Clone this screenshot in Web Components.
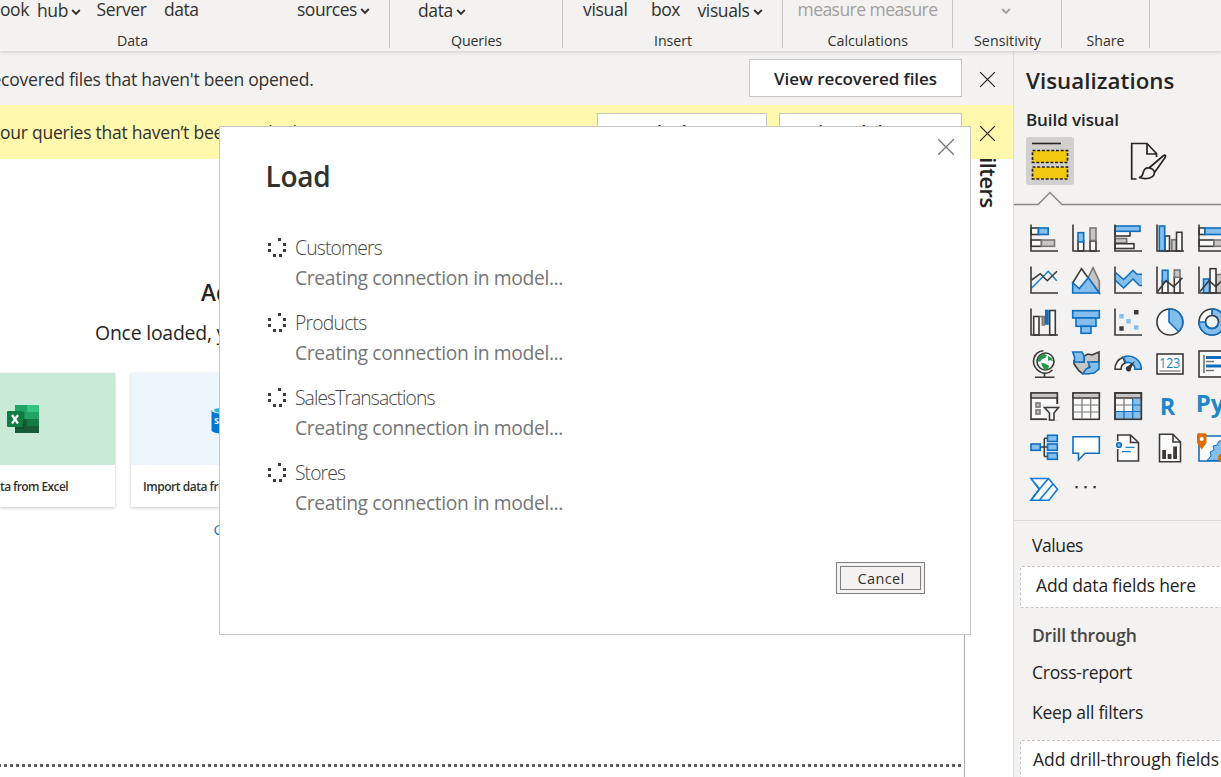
<!DOCTYPE html>
<html lang="en">
<head>
<meta charset="utf-8">
<title>Report editor</title>
<style>
html,body{margin:0;height:100%;overflow:hidden;background:#fff}
body{font-family:"Open Sans","Noto Sans",sans-serif;color:#323130}
</style>
</head>
<body>
<report-app></report-app>
<script>
// Registers an element whose shadow root is filled from a template string.
function define(name, css, html, after) {
  const tpl = document.createElement('template');
  tpl.innerHTML = '<style>*{box-sizing:border-box}' + css + '</style>' + html;
  customElements.define(name, class extends HTMLElement {
    connectedCallback() {
      if (this.shadowRoot) return;
      this.attachShadow({ mode: 'open' }).append(tpl.content.cloneNode(true));
      if (after) after(this, this.shadowRoot);
    }
  });
}

// One line of text, tracked to fill the width in its "w" attribute.
define('ui-text', `
:host{display:block;flex:none;white-space:nowrap;line-height:24px;height:24px;font-size:17.5px}
span{display:inline-block;height:100%;white-space:pre}`,
'<span><slot></slot></span>', (el, root) => {
  const size = el.getAttribute('size'), weight = el.getAttribute('weight'), w = +el.getAttribute('w');
  if (size) el.style.fontSize = size + 'px';
  if (weight) el.style.fontWeight = weight;
  if (w) {
    const span = root.querySelector('span');
    const n = el.textContent.length;
    el.style.letterSpacing = ((w - span.getBoundingClientRect().width) / n).toFixed(3) + 'px';
    el.style.width = w + 'px';
  }
});

define('ui-chevron', ':host{display:block;flex:none;width:10px;height:8px}svg{display:block}',
'<svg width="10" height="8" viewBox="0 0 10 8"><path d="M1.2 2 5 5.8 8.8 2" fill="none" stroke="currentColor" stroke-width="1.9"/></svg>');

define('ui-close', ':host{display:block;flex:none;width:18px;height:18px}svg{display:block;width:100%;height:100%}',
'<svg viewBox="0 0 18 18"><path d="M1.2 1.2 16.800 16.800M16.800 1.2 1.2 16.800" fill="none" stroke="currentColor" stroke-width="1.3"/></svg>');

define('ribbon-group', `
:host{display:flex;flex-direction:column;flex:none;height:48px;border-right:1px solid #c8c6c4}
.words{display:flex;align-items:flex-start;height:25px;flex:none}
.label{margin-top:4px;height:19px;flex:none}`,
'<div class="words"><slot></slot></div><div class="label"><slot name="label"></slot></div>');

define('app-ribbon', `
:host{display:flex;flex:none;height:51px;background:#f3f2f1;position:relative;z-index:1;box-shadow:0 1px 4px rgba(0,0,0,.16)}
ui-text{height:18px;line-height:18px}ui-text[slot]{height:19px;line-height:24px}
.d{margin-top:1px} ui-chevron{margin-top:7px;margin-left:4px;color:#323130} .off{color:#a19f9d}`,
`<ribbon-group style="width:390px">
  <ui-text w="29">ook</ui-text><ui-text class="d" w="31" style="margin-left:8px">hub</ui-text><ui-chevron style="margin-left:3px;margin-top:8px"></ui-chevron>
  <ui-text w="50" style="margin-left:15.5px">Server</ui-text><ui-text w="34.5" style="margin-left:17.5px">data</ui-text>
  <ui-text w="60" style="margin-left:98.5px">sources</ui-text><ui-chevron style="margin-left:3px"></ui-chevron>
  <ui-text slot="label" size="14.2" w="31" style="margin-left:117px">Data</ui-text>
</ribbon-group>
<ribbon-group style="width:173px">
  <ui-text class="d" w="35" style="margin-left:28px">data</ui-text><ui-chevron style="margin-left:3px;margin-top:8px"></ui-chevron>
  <ui-text slot="label" size="14.2" w="51" style="margin-left:61px">Queries</ui-text>
</ribbon-group>
<ribbon-group style="width:220px">
  <ui-text w="44.5" style="margin-left:20px">visual</ui-text><ui-text w="29" style="margin-left:23.5px">box</ui-text>
  <ui-text class="d" w="52" style="margin-left:17.5px">visuals</ui-text><ui-chevron style="margin-left:3px;margin-top:8px"></ui-chevron>
  <ui-text slot="label" size="14.2" w="38" style="margin-left:91px">Insert</ui-text>
</ribbon-group>
<ribbon-group style="width:170px">
  <ui-text class="off" w="140" style="margin-left:14.500px">measure measure</ui-text>
  <ui-text slot="label" size="14.2" w="80.500" style="margin-left:44.500px">Calculations</ui-text>
</ribbon-group>
<ribbon-group style="width:109px">
  <ui-chevron class="off" style="margin-left:48px;color:#a19f9d"></ui-chevron>
  <ui-text slot="label" size="14.2" w="67" style="margin-left:21px">Sensitivity</ui-text>
</ribbon-group>
<ribbon-group style="width:88px">
  <ui-text slot="label" size="14.2" w="38" style="margin-left:24.500px">Share</ui-text>
</ribbon-group>`);

define('bar-button', `
:host{display:flex;flex:none;justify-content:center;align-items:center;height:38px;background:#fff;border:1px solid #c8c6c4;color:#252423}`,
'<slot></slot>');

define('message-bar', `
:host{display:flex;flex:none;height:54px;padding:8px 17px 0 0;overflow:hidden;position:relative;background:#f3f2f1}
:host([warn]){background:#fff8ad}
.msg{flex:1;min-width:0;padding-top:8px}:host([warn]) .msg{padding-top:7px}.btns{display:flex;gap:12px}ui-close{margin:12px 0 0 17px;width:17px;height:17px;color:#252423}`,
'<div class="msg"><slot></slot></div><div class="btns"><slot name="b"></slot></div><ui-close></ui-close>');

define('source-card', `
:host{display:block;flex:none;height:134px;background:#fff;box-shadow:0 1px 3px rgba(0,0,0,.22);overflow:hidden}
.pic{height:92px;background:var(--tint)}.t{padding-top:10px}svg{display:block}`,
'<div class="pic"><slot name="pic"></slot></div><div class="t"><slot></slot></div>');

define('report-canvas', `
:host{display:flex;flex-direction:column;flex:none;width:965px;border-right:1px solid #b3b0ad;background:#fff;overflow:hidden}
.cards{display:flex;gap:15.500px;margin-top:28px;height:134px}
.dots{margin-top:auto;margin-bottom:10px;height:3px;width:962px;background:linear-gradient(90deg,#605e5c 50%,transparent 50%) 4px 0/6px 3px}
svg{display:block}`,
`<ui-text size="22.5" weight="600" w="43" style="margin:122px 0 0 201px;color:#252423">Add</ui-text>
<ui-text size="19.4" w="162" style="margin:16px 0 0 95px;color:#252423">Once loaded, your</ui-text>
<div class="cards">
  <source-card style="width:115px;--tint:#c9ead7">
    <svg slot="pic" width="115" height="92"><g transform="translate(7 32)">
      <rect x="8" width="24" height="28" rx="1" fill="#107c41"/><path d="M8 0h12v7H8z" fill="#21a366"/><path d="M20 0h12v7H20z" fill="#33c481"/><path d="M8 7h12v7H8z" fill="#21a366"/><path d="M20 7h12v7H20z" fill="#21a366"/><path d="M8 14h12v7H8z" fill="#185c37"/><path d="M8 21h24v7H8z" fill="#185c37"/>
      <path d="M8 7h9.500v17H8z" fill="#0b4a28" opacity=".5"/><rect y="6" width="16" height="16" rx="1" fill="#107c41"/><path d="M5 10l6 8.500M11 10 5 18.500" stroke="#fff" stroke-width="2.200"/></g></svg>
    <ui-text size="12" weight="600" w="68">ta from Excel</ui-text>
  </source-card>
  <source-card style="width:246px;--tint:#eff5fc">
    <svg slot="pic" width="246" height="92"><g transform="translate(80.500 33)">
      <path d="M0 4v20c0 2 4.500 3.500 10 3.500S20 26 20 24V4z" fill="#0078d4"/><ellipse cx="10" cy="4" rx="10" ry="3.700" fill="#e8f4fb"/><ellipse cx="10" cy="4.300" rx="7.500" ry="2.400" fill="#32b0d5"/><text x="2.500" y="18" font-family="Open Sans" font-size="9" font-weight="700" fill="#fff">SQL</text></g></svg>
    <ui-text size="12" weight="600" w="93" style="margin-left:12.500px">Import data from</ui-text>
  </source-card>
</div>
<ui-text size="14.500" w="25" style="margin:11px 0 0 213.500px;color:#0f6cbd">Get</ui-text>
<div class="dots"></div>`);

define('filter-strip', `
:host{display:block;flex:1;background:#fff;overflow:hidden}
div{writing-mode:vertical-rl;margin:-13px 0 0 10px;font-size:22px;font-weight:600;line-height:28px;height:80px;width:28px;letter-spacing:-.55px;color:#252423;white-space:nowrap}`,
'<div>Filters</div>');

const K = 'stroke="#3b3a39"', N = 'fill="none"', W = `fill="#fafafa" ${K}`, B = 'fill="#83beec" stroke="#106ebe"', G = 'fill="#c8c6c4" stroke="#797775"';
const AX = `<path d="M1 .5V27H28" ${N} ${K}/>`;
const r = (x, y, x2, y2, s) => `<rect x="${x}" y="${y}" width="${(x2 - x).toFixed(1)}" height="${(y2 - y).toFixed(1)}" ${s}/>`;
const HEAD = r(1, 1, 27.3, 27.3, W) + `<path d="M1 1H27.300V6H1z" fill="#c8c6c4" ${K}/>`;
const icons = [
  r(1, 4, 8.5, 10.5, W) + r(8.5, 4, 18.2, 10.5, B) + r(1, 16, 11.5, 22.3, W) + r(11.5, 16, 24.5, 22.3, G) + AX,
  r(6, 17, 11.7, 27, W) + r(6, 8.7, 11.7, 18, B) + r(18, 17, 24, 27, W) + r(18, 4, 24, 16.5, G) + AX,
  r(1, 7, 16, 12, W) + r(1, 2, 26, 7.3, B) + r(1, 14.5, 12.7, 19, G) + r(1, 19.7, 20, 24.5, W) + AX,
  r(9, 12, 13.5, 27, W) + r(3.3, 2, 8.7, 27, B) + r(15.7, 15.7, 20.5, 27, G) + r(20.5, 8.3, 26, 27, W) + AX,
  r(1, 4, 7, 10.5, W) + r(7, 4, 27, 10.5, B) + r(1, 16, 16, 22.3, W) + r(16, 16, 27, 22.3, G) + AX,
  `<path d="M1.700 22 18.300 5.300 26.700 14.700" ${N} stroke="#1a86c9"/><path d="M1.700 14 10.300 7.700 17.300 14.700 27 5.300" ${N} ${K}/>` + AX,
  `<path d="M.7 17 9.500 2.700 16.300 12 9 26z" ${W}/><path d="M16 12 21 1.700 27.300 15V27z" ${G}/><path d="M.7 17 7.300 22.500 16.300 11.500 27.300 27H.7z" ${B}/>`,
  `<path d="M1.500 6.500 9.700 13.500 19 4.300 23 8.300H28V19.500H26L19 13 9.700 22 1.500 14.500z" fill="#83beec"/><path d="M1.500 6.500 9.700 13.500 19 4.300 23 8.300H28M1.500 14.500 9.700 22 19 13 25.500 19.500H28" ${N} stroke="#106ebe"/>` + AX,
  r(6.3, 15, 12, 27, W) + r(6.3, 4.3, 12, 15.7, B) + r(18.3, 11, 24, 27, W) + r(18.3, 4, 24, 11.3, G) + `<path d="M1.700 25.500 10 14.700 17.700 20.700 26.500 11.700" ${N} ${K}/>` + AX,
  r(5.5, 13, 11.5, 27, B) + r(18, 8.5, 24, 27, G) + r(12, 2.7, 18, 27, W) + `<path d="M2 25.500 11 14.700 17.700 20.700 28 11" ${N} ${K}/>` + AX,
  r(3.7, 8.5, 9, 27, W) + `<path d="M10 8.500h4.300V17h-2V9z" ${G}/>` + r(15.8, 2.5, 18, 16, 'fill="#106ebe" stroke="#106ebe"') + r(19.7, 2.5, 25.3, 27, W) + AX,
  r(.7, 2.7, 27.3, 10, B) + r(4, 10, 24, 18.3, B) + r(9, 18.3, 19, 25.3, B),
  r(5.3, 6, 9.7, 10.5, 'fill="#83beec"') + r(12.3, 11, 16.7, 15.5, 'fill="#83beec"') + r(20, 17.3, 24.5, 21.7, 'fill="#83beec"') + r(20, 2, 24.5, 6.5, 'fill="#3b3a39"') + r(5.3, 18.3, 9.7, 22.7, 'fill="#3b3a39"') + AX,
  `<circle cx="13.900" cy="14" r="13" ${W}/><path d="M13 1.100V14L22.500 23.500A13 13 0 0 0 13.500 1z" ${B}/>`,
  `<circle cx="14" cy="14" r="13" ${W}/><path d="M14 1A13 13 0 1 1 1 14H7.500A6.500 6.500 0 1 0 14 7.500z" ${B}/><circle cx="14" cy="14" r="6.500" fill="#f3f2f1" ${K}/><path d="M20.500 14A6.500 6.500 0 1 1 7.500 14M14 1v6.500" ${N} stroke="#106ebe"/>`,
  `<circle cx="15.500" cy="11.500" r="8.500" ${W}/><path d="M9.500 6 14 3.800 17 5.500 15 8 11.500 9.500 10 12 7.500 11zM18 6l3.500 2 1.500 3.500-3-1.500-2 1zM11 13l4 .5 4 2.500-1 3.500-3.500.5-2-3.500z" fill="#1f9a48"/><path d="M13.500 .8C3.500 1.500 .5 13 7 19.500S19.500 23 22.500 20M14.500 23v4M5 27.300H24.500" ${N} ${K}/>`,
  `<path d="M12 6 16 4 20 5 27 2V12L20 12 15 20 11 24 7 21 2 14 2 11 12 12z" fill="#c8c6c4" ${K}/><path d="M.7 2H10L12 6V12H2.500V7zM16 12H27V19L22 23 15 24 11 23.500 14 19 18 17z" ${B}/>`,
  `<path d="M1 19.300A13 13 0 0 1 9 7.300L11 13A7 7 0 0 0 7 19.300z" ${W}/><path d="M9.500 7A13 13 0 0 1 27.300 19.300H21A7 7 0 0 0 12 12.700z" ${B}/><path d="M12 19.500A2.500 2.500 0 0 1 14 16L21 11 17 18.500A2.500 2.500 0 0 1 12 19.500z" fill="#3b3a39"/>`,
  r(1, 4, 27, 24, W) + `<path d="M3.500 21H24.500" stroke="#797775" stroke-width="1.200"/><text x="3.200" y="18.300" font-family="Open Sans" font-size="14" fill="#1a86c9" textLength="21" lengthAdjust="spacingAndGlyphs">123</text>`,
  r(1, 1, 29, 27, W) + `<path d="M6 5V23" stroke="#605e5c" stroke-width="1.400"/><path d="M8 7.500H28M8 16H28" stroke="#106ebe" stroke-width="2.800"/><path d="M8 11.500H16M8 20.500H16" stroke="#797775" stroke-width="1.300"/>`,
  HEAD + r(6, 11, 10, 15, G) + r(6, 18, 10, 22, G) + `<path d="M12 12h17v16h-13z" fill="#f3f2f1"/><path d="M1 27.300H17M27.300 6V12" ${K}/><path d="M14.500 15.500H28.500L24 21V28H19.500V21z" ${W}/>`,
  HEAD + `<path d="M10 6.500V27M18.700 6.500V27M1.500 13H27M1.500 20H27" stroke="#797775" stroke-width="1.200"/>`,
  HEAD + `<path d="M18.700 6.800H26.500V26.500H1.700V19H18.700z" fill="#83beec"/><path d="M10 6.500V19M2 13H18.700" stroke="#797775" stroke-width="1.200"/><path d="M18.700 6.500V27M18.700 13H27M1.500 19.500H27M10 19.500V27" stroke="#106ebe" stroke-width="1.200"/><path d="M1 1H27.300V27.300H1z" ${N} ${K}/>`,
  `<text x="3.700" y="22.700" font-family="Open Sans" font-weight="700" font-size="24" fill="#1f86c7" textLength="15.500" lengthAdjust="spacingAndGlyphs">R</text>`,
  `<text x="-2.300" y="20.300" font-family="Open Sans" font-weight="700" font-size="24" fill="#1f86c7">Py</text>`,
  `<path d="M10 13H18M14.300 4.300V22.500M14.300 4.300H18M14.300 22.500H18" ${N} ${K}/>` + r(1, 10, 10.3, 16.3, B) + r(17.5, 1.3, 27.3, 7.5, B) + r(17.5, 10, 27.3, 16.3, B) + r(17.5, 19, 27.3, 25.3, B),
  `<path d="M1 2.700H27.300V19.300H13L6.500 26V19.300H1z" fill="#fff" stroke="#106ebe"/>`,
  `<path d="M3.700 7V1H16.500L24.500 8.500V27H3.700V15" fill="#fafafa" ${K}/><path d="M16.500 1V8.500H24.500" ${N} ${K}/><circle cx="5" cy="11" r="2.300" fill="#83beec" stroke="#106ebe"/><path d="M11.500 13.300H20.500M8 17.700H17" stroke="#1a86c9" stroke-width="1.300"/>`,
  `<path d="M3.500 .3H17L24.500 8V27.700H3.500z" ${W}/><path d="M17 .3V8H24.500" ${N} ${K}/><path d="M6.200 16h3.800v9H6.200zM11.700 20h3.800v5h-3.800zM17.200 12.500H21V25h-3.800z" fill="#3b3a39"/>`,
  `<path d="M1 2H28V27H1z" fill="#fafafa" stroke="#106ebe"/><path d="M28 7H21L19 11 15 12 16 16 12 18 13 22 9 26.500H28z" fill="#83beec" stroke="#106ebe" stroke-width="1"/><path d="M0 -.7H7.500L8.500 .3V9L3.700 15.500-1 9V.3z" fill="#e06c00"/><circle cx="3.700" cy="5" r="2" fill="#fff"/><circle cx="24.500" cy="24" r="4.500" fill="#e06c00"/>`,
  `<path d="M1 2.500H18.500L27.500 13.300 19 24.300H1L9.300 13.300z" fill="#fafafa" stroke="#0f7ad6"/><path d="M9.300 13.300 18.500 2.500M1 24.300 9.300 13.300M9.500 24 23 8M4.500 7l5 6" ${N} stroke="#0f7ad6"/>`,
  `<path d="M3.500 10h2.200v2.200H3.500zM12.500 10h2.200v2.200h-2.200zM21.500 10h2.200v2.200h-2.200z" fill="#323130"/>`
];

define('visual-grid', `
:host{display:grid;grid-template-columns:repeat(5,28px);grid-auto-rows:28px;gap:14px}
svg{display:block;overflow:visible;stroke-width:1.6}svg text{stroke:none}`, '', (el, root) => {
  for (const i of icons) {
    const t = document.createElement('template');
    t.innerHTML = `<svg width="28" height="28" viewBox="0 0 28 28">${i}</svg>`;
    root.append(t.content);
  }
});

define('field-well', `
:host{display:block;flex:none;height:42px;margin-left:6px;width:230px;background:#fff;border:1px dashed #c8c6c4;border-radius:2px;padding-top:6px}`, '<slot></slot>');

define('visual-pane', `
:host{display:flex;flex-direction:column;flex:none;width:208px;background:#f3f2f1;border-left:1px solid #dedcda;overflow:hidden;color:#252423}
.tabs{display:flex;height:48px;margin:5px 0 0 12px;gap:56px;flex:none}
.tile{width:48px;height:48px;background:#d2d0ce;border-radius:3px}.tile svg,.line{display:block}
.line{flex:none;margin-top:6px}visual-grid{margin:18px 0 0 16px;flex:none;height:280px}
.rule{height:1px;background:#dcdad8;margin-top:16px;flex:none}`,
`<ui-text size="22.3" weight="600" w="148.500" style="margin:18px 0 0 12px">Visualizations</ui-text>
<ui-text size="17" weight="600" w="93" style="margin:15px 0 0 12px">Build visual</ui-text>
<div class="tabs">
  <div class="tile"><svg width="48" height="48"><path d="M6 6.500H35" stroke="#252423" stroke-width="1.600"/><path d="M6.500 13.500H41.500V25.500H6.500zM6.500 30H41.500V42H6.500z" fill="#f2c811" stroke="#252423" stroke-width="1.700" stroke-dasharray="3 1.700"/></svg></div>
  <svg width="48" height="48" fill="none" stroke="#252423" stroke-width="1.700"><path d="M6.500 42H1.700V6.500H17L26.500 16.500V20M17 6.500V17H27"/><path d="M19 31 33 19Q36 17 35.500 20L24.500 35.500M19 31Q23.500 31.500 24.500 35.500C24 41 17 43 9 40.500 14 40 12 35 15 32Q17 30.500 19 31z" fill="#f3f2f1"/></svg>
</div>
<svg class="line" width="208" height="15" fill="none" stroke="#8a8886" stroke-width="1.500"><path d="M0 13.500H24L36 1.500 48 13.500H208"/></svg>
<visual-grid></visual-grid>
<div class="rule"></div>
<ui-text w="51" style="margin:12px 0 9px 18px">Values</ui-text>
<field-well><ui-text w="160" style="margin-left:15px">Add data fields here</ui-text></field-well>
<ui-text weight="600" w="104.500" style="margin:15px 0 0 18px;color:#484644">Drill through</ui-text>
<ui-text w="100" style="margin:13px 0 0 18px">Cross-report</ui-text>
<ui-text w="111" style="margin:16px 0 16px 18px">Keep all filters</ui-text>
<field-well><ui-text w="186" style="margin-left:12px">Add drill-through fields</ui-text></field-well>`);

define('load-row', `
:host{display:flex;height:75px}svg{flex:none;display:block;width:20px;height:20px;margin:2px 8px 0 0}
.n{color:#484644}.s{margin-top:6px;color:#767676}`,
`<svg fill="#3b3b3b"><path d="M11 0h3v3h-3zM16 5h3v3h-3zM16 11h3v3h-3zM12 16h3v3h-3zM6 16h3v3H6zM1 11h3v3H1zM1 5h3v3H1z"/></svg>
<div><div class="n"><slot></slot></div><ui-text class="s" size="19.3" w="268">Creating connection in model...</ui-text></div>`);

// The dialog floats over the whole editor.
define('load-dialog', `
:host{display:flex;flex-direction:column;position:absolute;z-index:5;left:219px;top:126px;width:752px;height:509px;background:#fff;border:1px solid #c6c6c6;color:#323130}
ui-close{align-self:flex-end;margin:11px 15px 0 0;width:18px;height:18px;color:#767676}
.rows{margin:48px 0 0 47px;display:flex;flex-direction:column}
button{all:unset;box-sizing:border-box;align-self:flex-end;width:89px;height:32px;margin:26px 45px 0 0;border:1px solid #7f7f7f;background:#f3f2f1;padding:3px}
button div{border:1px solid #7f7f7f;height:24px;padding-left:16.500px}`,
`<ui-close></ui-close>
<ui-text size="28" weight="600" w="65" style="margin:8px 0 0 45.500px">Load</ui-text>
<div class="rows">
<load-row><ui-text size="19.3" weight="300" w="87">Customers</ui-text></load-row>
<load-row><ui-text size="19.3" weight="300" w="71.500">Products</ui-text></load-row>
<load-row><ui-text size="19.3" weight="300" w="139.500">SalesTransactions</ui-text></load-row>
<load-row><ui-text size="19.3" weight="300" w="50">Stores</ui-text></load-row>
</div>
<button><div><ui-text size="14.5" w="47" style="line-height:23px">Cancel</ui-text></div></button>`);

define('report-app', `
:host{display:flex;flex-direction:column;width:1221px;height:777px;overflow:hidden;position:relative}
.main{display:flex;flex:1;min-height:0}.left{display:flex;flex-direction:column;flex:1;min-width:0}.stage{display:flex;flex:1;min-height:0}`,
`<app-ribbon></app-ribbon>
<div class="main">
  <div class="left">
    <message-bar><ui-text w="322" style="margin-left:-8.500px">ecovered files that haven't been opened.</ui-text>
      <bar-button slot="b" style="width:213px"><ui-text weight="600" size="17" w="163" style="line-height:26px">View recovered files</ui-text></bar-button></message-bar>
    <message-bar warn><ui-text w="301">our queries that haven’t been applied.</ui-text>
      <bar-button slot="b" style="width:170px"><ui-text weight="600" size="17.500" w="113">Apply changes</ui-text></bar-button>
      <bar-button slot="b" style="width:183px"><ui-text weight="600" size="17.500" w="129">Discard changes</ui-text></bar-button></message-bar>
    <div class="stage"><report-canvas></report-canvas><filter-strip></filter-strip></div>
  </div>
  <visual-pane></visual-pane>
</div>
<load-dialog></load-dialog>`);
</script>
</body>
</html>
